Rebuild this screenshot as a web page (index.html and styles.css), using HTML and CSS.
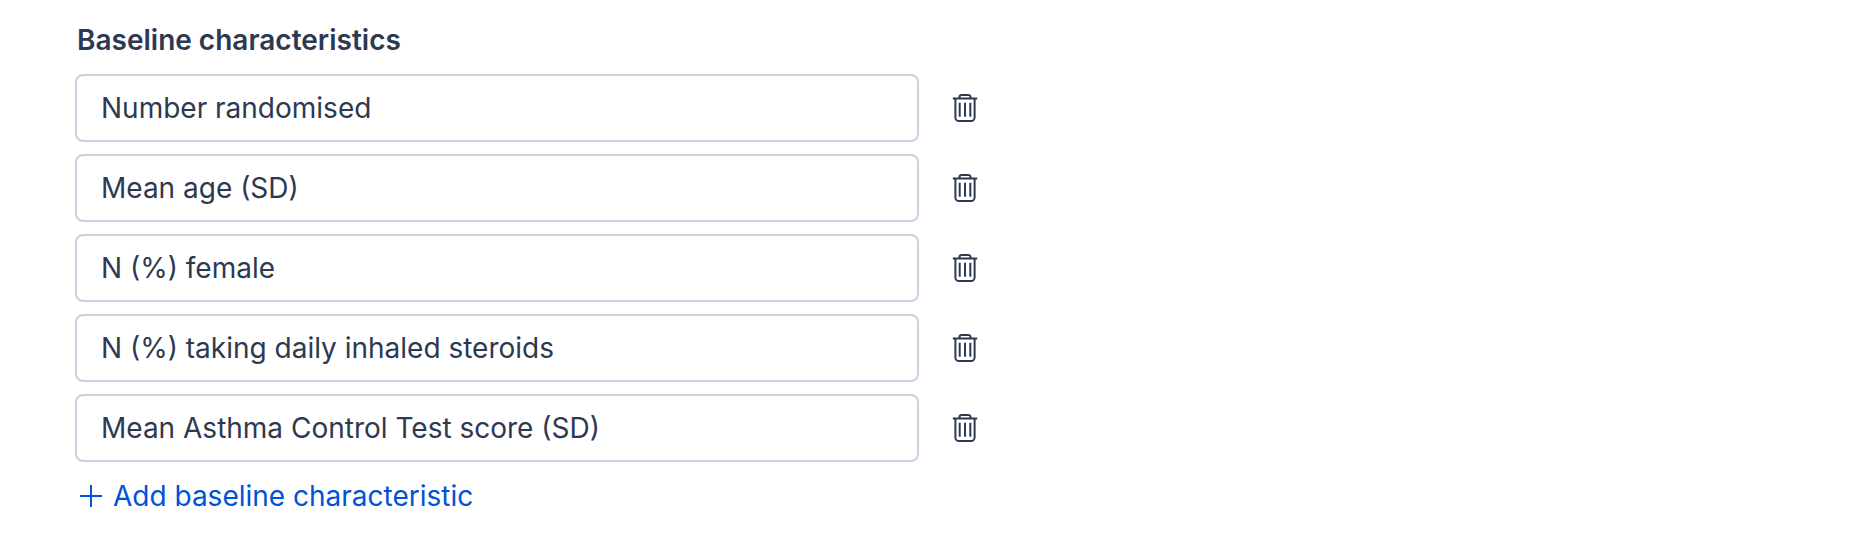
FILE: index.html
```html
<!DOCTYPE html>
<html lang="en">
<head>
    <meta charset="UTF-8">
    <meta name="viewport" content="width=device-width, initial-scale=1.0">
    <title>Baseline characteristics</title>
    <link rel="stylesheet" href="styles.css">
</head>
<body>
    <!-- Shared trash icon -->
    <svg class="sprite" aria-hidden="true">
        <symbol id="trash" viewBox="0 0 28 28">
            <path d="M1.8 4.6h24.4M8.4 4.6V3.4a2.4 2.4 0 0 1 2.4-2.4h6.4a2.4 2.4 0 0 1 2.4 2.4v1.2M4.4 4.6v18.8a3.6 3.6 0 0 0 3.6 3.6h12a3.6 3.6 0 0 0 3.6-3.6v-18.8M8.7 8.7v14M14 8.7v14M19.3 8.7v14"/>
        </symbol>
    </svg>

    <form class="characteristics">
        <h2>Baseline characteristics</h2>
        <div class="rows">
            <div class="row">
                <input type="text" aria-label="Characteristic 1" value="Number randomised">
                <button type="button" class="delete" aria-label="Delete characteristic 1"><svg><use href="#trash"/></svg></button>
            </div>
            <div class="row">
                <input type="text" aria-label="Characteristic 2" value="Mean age (SD)">
                <button type="button" class="delete" aria-label="Delete characteristic 2"><svg><use href="#trash"/></svg></button>
            </div>
            <div class="row">
                <input type="text" aria-label="Characteristic 3" value="N (%) female">
                <button type="button" class="delete" aria-label="Delete characteristic 3"><svg><use href="#trash"/></svg></button>
            </div>
            <div class="row">
                <input type="text" aria-label="Characteristic 4" value="N (%) taking daily inhaled steroids">
                <button type="button" class="delete" aria-label="Delete characteristic 4"><svg><use href="#trash"/></svg></button>
            </div>
            <div class="row">
                <input type="text" aria-label="Characteristic 5" value="Mean Asthma Control Test score (SD)">
                <button type="button" class="delete" aria-label="Delete characteristic 5"><svg><use href="#trash"/></svg></button>
            </div>
        </div>
        <button type="button" class="add">
            <svg viewBox="0 0 24 24" aria-hidden="true"><path d="M12 1v22M1 12h22"/></svg>
            Add baseline characteristic
        </button>
    </form>
</body>
</html>
```
FILE: styles.css
```css
* {
    box-sizing: border-box;
}
body {
    margin: 0;
    background: #fff;
    color: #2d3950;
    font-family: Inter, sans-serif;
    font-size: 28px;
    line-height: 36px;
}
.sprite {
    display: none;
}
.characteristics {
    max-width: 979px;
    padding: 22px 0 22px 75px;
}
h2 {
    margin: 0 0 16px;
    padding-left: 2px;
    font-size: 28px;
    font-weight: 600;
}
.rows {
    display: flex;
    flex-direction: column;
    gap: 12px;
}
.row {
    display: flex;
    align-items: center;
    gap: 32px;
}
.row input {
    flex: 1;
    min-width: 0;
    height: 68px;
    padding: 0 24px;
    border: 2px solid #cbd1e0;
    border-radius: 8px;
    background: #fff;
    color: inherit;
    font: inherit;
}
button {
    padding: 0;
    border: 0;
    background: none;
    color: inherit;
    font: inherit;
    cursor: pointer;
}
svg {
    display: block;
    fill: none;
    stroke: currentColor;
}
.delete svg {
    width: 28px;
    height: 28px;
    stroke-width: 2;
}
.add {
    display: flex;
    align-items: center;
    gap: 10px;
    margin-top: 16px;
    padding-left: 4px;
    color: #0052d6;
}
.add svg {
    width: 24px;
    height: 24px;
    stroke-width: 2;
}
```
